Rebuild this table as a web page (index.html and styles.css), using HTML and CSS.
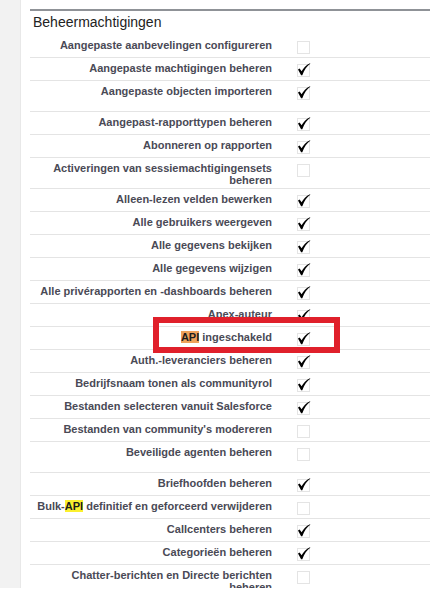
FILE: index.html
```html
<!DOCTYPE html>
<html lang="nl">
<head>
<meta charset="utf-8">
<title>Beheermachtigingen</title>
<link rel="stylesheet" href="styles.css">
</head>
<body>
<svg class="sprite" xmlns="http://www.w3.org/2000/svg">
  <symbol id="box" viewBox="0 0 14 15">
    <rect x="0.5" y="1.5" width="12" height="12" fill="none" stroke="#c9c9c9" stroke-width="1" stroke-dasharray="1 1"/>
  </symbol>
  <symbol id="tick" viewBox="0 0 14 15">
    <path d="M1 6.6 L2.6 5.4 L4.6 8.3 C6.4 5.1 9 2.1 13 0.2 L13.3 0.8 C10 3.2 7.2 6.9 5.3 12.2 L4.1 12.2 Z" fill="#000"/>
  </symbol>
</svg>
<div class="page">
  <aside class="rail"></aside>
  <main class="content">
    <section class="section">
      <h3 class="section-title">Beheermachtigingen</h3>
      <div class="perm-list">
        <div class="perm-row"><div class="perm-label">Aangepaste aanbevelingen configureren</div><div class="perm-value"><svg class="cb"><use href="#box"/></svg></div></div>
        <div class="perm-row"><div class="perm-label">Aangepaste machtigingen beheren</div><div class="perm-value"><svg class="cb"><use href="#box"/><use href="#tick"/></svg></div></div>
        <div class="perm-row perm-row--tall"><div class="perm-label">Aangepaste objecten importeren</div><div class="perm-value"><svg class="cb"><use href="#box"/><use href="#tick"/></svg></div></div>
        <div class="perm-row"><div class="perm-label">Aangepast-rapporttypen beheren</div><div class="perm-value"><svg class="cb"><use href="#box"/><use href="#tick"/></svg></div></div>
        <div class="perm-row"><div class="perm-label">Abonneren op rapporten</div><div class="perm-value"><svg class="cb"><use href="#box"/><use href="#tick"/></svg></div></div>
        <div class="perm-row"><div class="perm-label">Activeringen van sessiemachtigingensets beheren</div><div class="perm-value"><svg class="cb"><use href="#box"/></svg></div></div>
        <div class="perm-row"><div class="perm-label">Alleen-lezen velden bewerken</div><div class="perm-value"><svg class="cb"><use href="#box"/><use href="#tick"/></svg></div></div>
        <div class="perm-row"><div class="perm-label">Alle gebruikers weergeven</div><div class="perm-value"><svg class="cb"><use href="#box"/><use href="#tick"/></svg></div></div>
        <div class="perm-row"><div class="perm-label">Alle gegevens bekijken</div><div class="perm-value"><svg class="cb"><use href="#box"/><use href="#tick"/></svg></div></div>
        <div class="perm-row"><div class="perm-label">Alle gegevens wijzigen</div><div class="perm-value"><svg class="cb"><use href="#box"/><use href="#tick"/></svg></div></div>
        <div class="perm-row"><div class="perm-label">Alle privérapporten en -dashboards beheren</div><div class="perm-value"><svg class="cb"><use href="#box"/><use href="#tick"/></svg></div></div>
        <div class="perm-row"><div class="perm-label">Apex-auteur</div><div class="perm-value"><svg class="cb"><use href="#box"/><use href="#tick"/></svg></div></div>
        <div class="perm-row perm-row--marked"><div class="perm-label"><span class="hl hl--orange">API</span> ingeschakeld</div><div class="perm-value"><svg class="cb"><use href="#box"/><use href="#tick"/></svg></div><span class="callout"></span></div>
        <div class="perm-row"><div class="perm-label">Auth.-leveranciers beheren</div><div class="perm-value"><svg class="cb"><use href="#box"/><use href="#tick"/></svg></div></div>
        <div class="perm-row"><div class="perm-label">Bedrijfsnaam tonen als communityrol</div><div class="perm-value"><svg class="cb"><use href="#box"/><use href="#tick"/></svg></div></div>
        <div class="perm-row"><div class="perm-label">Bestanden selecteren vanuit Salesforce</div><div class="perm-value"><svg class="cb"><use href="#box"/><use href="#tick"/></svg></div></div>
        <div class="perm-row"><div class="perm-label">Bestanden van community's modereren</div><div class="perm-value"><svg class="cb"><use href="#box"/></svg></div></div>
        <div class="perm-row perm-row--tall"><div class="perm-label">Beveiligde agenten beheren</div><div class="perm-value"><svg class="cb"><use href="#box"/></svg></div></div>
        <div class="perm-row"><div class="perm-label">Briefhoofden beheren</div><div class="perm-value"><svg class="cb"><use href="#box"/><use href="#tick"/></svg></div></div>
        <div class="perm-row"><div class="perm-label">Bulk-<span class="hl hl--yellow">API</span> definitief en geforceerd verwijderen</div><div class="perm-value"><svg class="cb"><use href="#box"/></svg></div></div>
        <div class="perm-row"><div class="perm-label">Callcenters beheren</div><div class="perm-value"><svg class="cb"><use href="#box"/><use href="#tick"/></svg></div></div>
        <div class="perm-row"><div class="perm-label">Categorieën beheren</div><div class="perm-value"><svg class="cb"><use href="#box"/><use href="#tick"/></svg></div></div>
        <div class="perm-row"><div class="perm-label">Chatter-berichten en Directe berichten beheren</div><div class="perm-value"><svg class="cb"><use href="#box"/></svg></div></div>
        <div class="perm-row"><div class="perm-label">Chatter-groepen beheren</div><div class="perm-value"><svg class="cb"><use href="#box"/></svg></div></div>
      </div>
    </section>
  </main>
</div>
</body>
</html>
```

FILE: styles.css
```css
html, body {
  margin: 0;
  padding: 0;
  background: #ffffff;
}

body {
  font-family: "Liberation Sans", Arial, sans-serif;
  color: #4a4a56;
}

.sprite {
  width: 0;
  height: 0;
  overflow: hidden;
  display: block;
}

.page {
  display: flex;
  height: 588px;
  overflow: hidden;
}

.rail {
  width: 20px;
  flex: 0 0 20px;
  background: #f2f2f2;
  border-right: 1px solid #e8e8e8;
}

.content {
  flex: 1;
  padding: 9px 0 0 9px;
  min-width: 0;
}

.section {
  border-top: 2px solid #8f9297;
}

.section-title {
  margin: 0;
  padding: 3px 3px 5px;
  font-size: 14px;
  line-height: 16px;
  font-weight: normal;
  color: #222222;
}

.perm-row {
  position: relative;
  display: grid;
  grid-template-columns: 252px 1fr;
  min-height: 23px;
  box-sizing: border-box;
  border-bottom: 1px solid #e4e4e4;
}

.perm-row--tall {
  min-height: 31px;
}

.perm-label {
  padding: 4px 10px 2px 2px;
  font-size: 11px;
  line-height: 12px;
  font-weight: bold;
  text-align: right;
  color: #4a4a56;
}

.perm-value {
  padding: 5px 0 0 15px;
}

.cb {
  display: block;
  width: 14px;
  height: 15px;
}

.hl {
  color: #1c1c1c;
}

.hl--orange {
  background: #eea25a;
}

.hl--yellow {
  background: #fbf02e;
}

.callout {
  position: absolute;
  left: 123px;
  top: -10px;
  width: 187px;
  height: 36px;
  box-sizing: border-box;
  border: 6px solid #e0202b;
  pointer-events: none;
}
```
